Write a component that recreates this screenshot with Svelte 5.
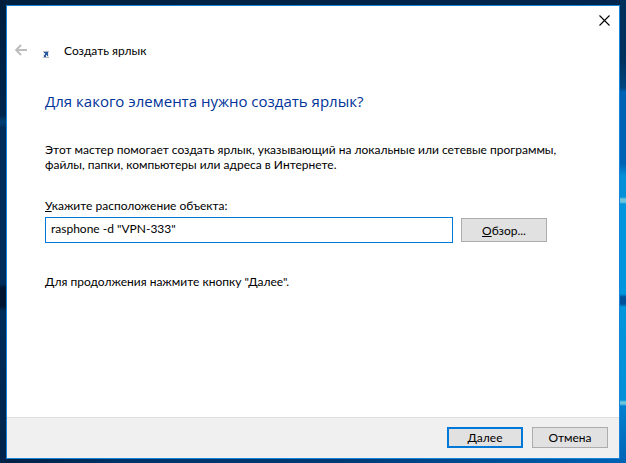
<script lang="ts">
  let location = 'rasphone -d "VPN-333"';
  let open = true;

  function close() {
    open = false;
  }

  function handleNext() {
    if (location.trim()) {
      console.log('Shortcut target:', location);
    }
  }
</script>

<div class="desktop">
  {#if open}
    <form class="wizard" on:submit|preventDefault={handleNext}>
      <div class="titlebar">
        <button type="button" class="close" aria-label="Закрыть" on:click={close}>
          <svg width="11" height="11" viewBox="0 0 11 11" fill="none" stroke="#000" stroke-width="1.1">
            <path d="M0.5 0.5L10.5 10.5M10.5 0.5L0.5 10.5" />
          </svg>
        </button>
      </div>

      <header>
        <button type="button" class="back" aria-label="Назад" disabled>
          <svg width="12" height="12" viewBox="0 0 12 12" fill="none" stroke="#bdbdbd" stroke-width="2">
            <path d="M12 6H1.5M6 1L1.2 6L6 11" />
          </svg>
        </button>
        <svg class="shortcut" width="6" height="7" viewBox="0 0 6 7">
          <rect width="6" height="7" fill="#e4e9f0" />
          <path d="M0 0.5H6M0 6.5H6" stroke="#b4b7bb" />
          <path d="M1 1H5V5H4V4H3V6H1V4H2V2H1Z" fill="#2a5ca6" />
        </svg>
        <span>Создать ярлык</span>
      </header>

      <main>
        <h1>Для какого элемента нужно создать ярлык?</h1>
        <p class="intro">
          Этот мастер помогает создать ярлык, указывающий на локальные или сетевые программы, файлы, папки, компьютеры или адреса в Интернете.
        </p>
        <label for="location"><u>У</u>кажите расположение объекта:</label>
        <div class="row">
          <input id="location" type="text" bind:value={location} spellcheck="false" autocomplete="off" />
          <button type="button" class="button browse"><u>О</u>бзор...</button>
        </div>
        <p>Для продолжения нажмите кнопку "Далее".</p>
      </main>

      <footer>
        <button type="submit" class="button primary"><u>Д</u>алее</button>
        <button type="button" class="button" on:click={close}>Отмена</button>
      </footer>
    </form>
  {/if}
</div>

<style>
  .desktop {
    box-sizing: border-box;
    display: flex;
    min-height: 100vh;
    padding: 5px 6px 4px;
    font-family: Lato, "Open Sans", sans-serif;
    font-size: 12px;
    line-height: 15px;
    color: #000;
    background:
      linear-gradient(#002f5c, #00305e 60px, #004680 88px, #0062b4 92px, #0062b4 164px, #0090d8 176px, #0090d8 197px, #6cc5dd 199px, #6cc5dd 202px, #0095dc 204px, #0095dc 294px, #00509a 297px, #00509a 304px, #0095dc 307px, #0090d8 400px, #6cc5dd 402px, #6cc5dd 404px, #0080d0 406px, #0062b4) right / 6px 100% no-repeat,
      linear-gradient(#001d3d, #00254c 115px, #003f73 122px, #002c59 128px, #002c59 284px, #001531 288px, #001531 306px, #002c59 311px, #00234a) left / 6px 100% no-repeat,
      linear-gradient(90deg, #00203f, #00264e) top / 100% 5px no-repeat,
      linear-gradient(90deg, #001f42, #003468 120px, #003a75 55%, #0062b4) bottom / 100% 4px no-repeat,
      #00305e;
  }

  .wizard {
    display: flex;
    flex: 1;
    flex-direction: column;
    border: 1px solid #1883d7;
    background: #fff;
  }

  .titlebar {
    display: flex;
    justify-content: flex-end;
  }

  .close,
  .back {
    display: flex;
    align-items: center;
    justify-content: center;
    padding: 0;
    border: none;
    background: none;
  }

  .close {
    width: 30px;
    height: 29px;
  }

  .close:hover {
    background: #e8e8e8;
  }

  header {
    display: flex;
    align-items: center;
    height: 30px;
    padding-left: 8px;
  }

  .shortcut {
    margin: 8px 15px 0 16px;
  }

  main {
    flex: 1;
    padding: 26px 38px 0;
  }

  h1 {
    margin: 0;
    font-family: "Open Sans", "Noto Sans", sans-serif;
    font-size: 15px;
    font-weight: 400;
    line-height: 20px;
    color: #003399;
  }

  p {
    margin: 0;
  }

  .intro {
    margin: 31px 0 26px;
    max-width: 524px;
  }

  label {
    display: block;
  }

  .row {
    display: flex;
    align-items: center;
    gap: 8px;
    max-width: 502px;
    margin: 4px 0 31px;
  }

  input {
    box-sizing: border-box;
    flex: 1;
    min-width: 0;
    height: 26px;
    padding: 0 5px 4px;
    border: 1px solid #0078d7;
    outline: none;
    font: inherit;
    color: inherit;
    background: #fff;
  }

  .button {
    box-sizing: border-box;
    width: 76px;
    height: 21px;
    padding: 0;
    border: 1px solid #adadad;
    font: inherit;
    color: inherit;
    background: #e1e1e1;
  }

  .button:hover {
    background: #e5f1fb;
  }

  .browse {
    width: 86px;
    height: 24px;
  }

  .primary {
    border: 2px solid #0078d7;
  }

  footer {
    display: flex;
    justify-content: flex-end;
    gap: 9px;
    padding: 9px 11px 10px;
    border-top: 1px solid #dfdfdf;
    background: #f0f0f0;
  }
</style>
